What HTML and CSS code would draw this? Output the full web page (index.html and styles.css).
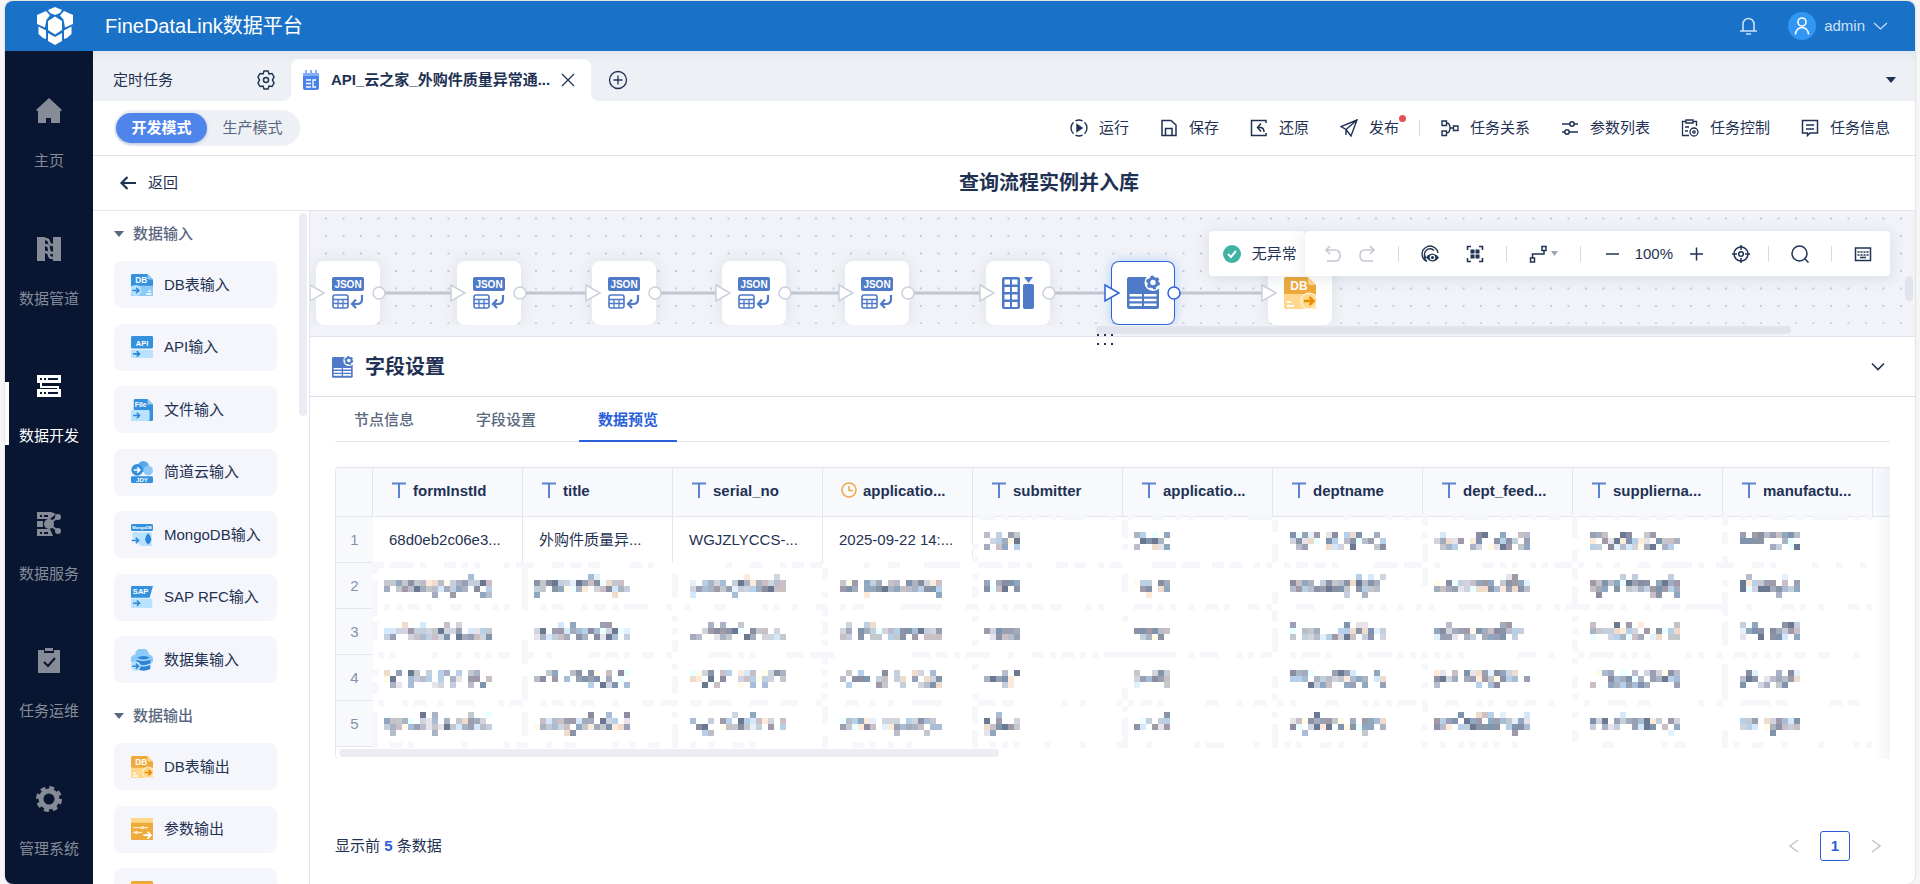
FILE: index.html
```html
<!DOCTYPE html>
<html lang="zh-CN">
<head>
    <meta charset="UTF-8">
    <meta name="viewport" content="width=device-width, initial-scale=1.0">
    <title>FineDataLink数据平台</title>
    <link rel="stylesheet" href="styles.css">
</head>
<body>
    <!-- shared icons -->
    <svg class="sprite" aria-hidden="true">
        <symbol id="node-json" viewBox="0 0 32 32">
            <rect x="0" y="0" width="32" height="14" rx="2" fill="#4f7ac7"/>
            <text x="16" y="11" text-anchor="middle" font-size="10" font-weight="bold" fill="#fff">JSON</text>
            <rect x="1" y="18" width="15" height="13" rx="2" fill="none" stroke="#4f7ac7" stroke-width="1.6"/>
            <path d="M1 22.500h15M1 26.500h15M6 22v9M11 22v9" stroke="#4f7ac7" stroke-width="1.300"/>
            <path d="M30 18v4q0 5-5 5h-4M24 22.500L20 27l4 4" fill="none" stroke="#4f7ac7" stroke-width="2.200"/>
        </symbol>
        <symbol id="field-icon" viewBox="0 0 32 32">
            <path d="M2 0H32V30q0 2-2 2H2q-2 0-2-2V2q0-2 2-2z" fill="#4f7ac7"/>
            <path d="M2.500 17H15v2.500H2.500zM17 17H29.500v2.500H17zM2.500 21.700H15v2.500H2.500zM17 21.700H29.500v2.500H17zM2.500 26.500H15v2.500H2.500zM17 26.500H29.500v2.500H17z" fill="#fff"/>
            <circle cx="26" cy="5.500" r="8.500" fill="#fff"/>
            <circle cx="26" cy="5.500" r="4.200" fill="none" stroke="#4f7ac7" stroke-width="3"/>
            <circle cx="26" cy="5.500" r="6" fill="none" stroke="#4f7ac7" stroke-width="2" stroke-dasharray="3 3.280"/>
        </symbol>
        <symbol id="db-out" viewBox="0 0 32 32">
            <path d="M2 0H24L32 8V18H0V2q0-2 2-2z" fill="#efaa3c"/>
            <path d="M0 17H32V30q0 2-2 2H2q-2 0-2-2z" fill="#ffd88b"/>
            <path d="M24 0l8 8h-6q-2 0-2-2z" fill="#ffd88b"/>
            <text x="15" y="13" text-anchor="middle" font-size="12" font-weight="bold" fill="#fff">DB</text>
            <path d="M3 25h4M3 29h7" stroke="#fff" stroke-width="2"/>
            <circle cx="25" cy="24" r="8" fill="#ffd88b" stroke="#fff" stroke-width="1"/>
            <path d="M20 24h9M25.500 20l4 4-4 4" fill="none" stroke="#e68a00" stroke-width="2.400"/>
        </symbol>
        <symbol id="db-in" viewBox="0 0 32 32">
            <path d="M2 0H24L32 8V18H0V2q0-2 2-2z" fill="#3391dd"/>
            <path d="M0 17H32V30q0 2-2 2H2q-2 0-2-2z" fill="#8ccbf8"/>
            <path d="M24 0l8 8h-6q-2 0-2-2z" fill="#8ccbf8"/>
            <text x="15" y="13" text-anchor="middle" font-size="12" font-weight="bold" fill="#fff">DB</text>
            <path d="M25 25h4M22 29h8" stroke="#fff" stroke-width="2"/>
            <circle cx="7" cy="24" r="8" fill="#b9e2ff"/>
            <path d="M2 24h9M7.500 20l4 4-4 4" fill="none" stroke="#2b86d6" stroke-width="2.400"/>
        </symbol>
        <symbol id="type-text" viewBox="0 0 14 16">
            <path d="M0 1.500h14M7 1v15" fill="none" stroke="#5b84d0" stroke-width="2"/>
        </symbol>
        <symbol id="ports" viewBox="0 0 84 20">
            <path d="M4 2L18 10L4 18z" fill="#fff" stroke="currentColor" stroke-width="1.500"/>
            <circle cx="73" cy="10" r="6" fill="#fff" stroke="currentColor" stroke-width="1.500"/>
        </symbol>
    </svg>

    <div class="app">
        <header class="topbar">
            <svg width="36" height="38" viewBox="0 0 36 38" fill="#fff">
                <path d="M18 0l7 3-2 3-5 2-5-2-2-3zM9 4l4 4.500-3.500 4L8 20.500 0 17V8zM27 4l-4 4.500 3.500 4L28 20.500 36 17V8zM18 9.500l7 4.500v9l-7 4.500-7-4.500v-9zM1.500 19.500l7.500 4V32l-3-1-4.500-4zM34.500 19.500l-7.500 4V32l3-1 4.500-4zM11 26l7 4 7-4v8l-7 4-7-4z"/>
            </svg>
            <h1>FineDataLink数据平台</h1>
            <div class="user">
                <button class="bell" aria-label="消息">
                    <svg width="17" height="18" viewBox="0 0 17 18" fill="none" stroke="currentColor" stroke-width="1.600">
                        <path d="M3 14V7a5.500 5.500 0 0 1 11 0v7M0 14h17M6 17h5"/>
                    </svg>
                </button>
                <button class="account">
                    <svg width="28" height="28" viewBox="0 0 28 28" fill="none" stroke="#fff" stroke-width="1.600">
                        <circle cx="14" cy="14" r="14" fill="#3296f5" stroke="none"/>
                        <circle cx="14" cy="10" r="4"/>
                        <path d="M7.500 22.500a6.500 7 0 0 1 13 0"/>
                    </svg>
                    <span>admin</span>
                    <svg width="15" height="8" viewBox="0 0 15 8" fill="none" stroke="currentColor" stroke-width="1.200"><path d="M1 1l6.500 6L14 1"/></svg>
                </button>
            </div>
        </header>

        <div class="body">
            <nav class="sidebar">
                <a href="#">
                    <svg width="26" height="26" viewBox="0 0 26 26" fill="currentColor"><path d="M13 0L0 12l1 1h1v12h8v-5h5v5h9V13h1l1-1z"/></svg>
                    <span>主页</span>
                </a>
                <a href="#">
                    <svg width="26" height="26" viewBox="0 0 26 26" fill="currentColor"><path d="M1 1h8v24H1zM17 1h8v24h-8z"/><path d="M9 3q4 0 4 3t4 3M9 9q4 0 4 4t4 4M9 16q4 0 4 3t4 3" fill="none" stroke="currentColor" stroke-width="2.500"/></svg>
                    <span>数据管道</span>
                </a>
                <a href="#" class="active">
                    <svg width="26" height="26" viewBox="0 0 26 26" fill="currentColor"><path fill-rule="evenodd" d="M1 2h24v8H1zM4 5v2h2V5zM8 5v2h2V5zM12 5v2h10V5zM1 16h24v8H1zM4 19v2h2v-2zM8 19v2h2v-2zM12 19v2h10v-2z"/><path d="M5 10v4h17v2" fill="none" stroke="currentColor" stroke-width="2"/></svg>
                    <span>数据开发</span>
                </a>
                <a href="#">
                    <svg width="26" height="26" viewBox="0 0 26 26" fill="currentColor"><path fill-rule="evenodd" d="M1 1h14l5 2-6 5H1zM4 4v2h2V4zM8 4v2h4V4zM1 10h6v6H1zM1 18h13l3 7H1zM4 21v2h2v-2zM8 21v2h4v-2z"/><circle cx="13" cy="13" r="5"/><circle cx="22" cy="6" r="3"/><circle cx="22" cy="20" r="3"/><path d="M13 13l9-7M13 13l9 7" stroke="currentColor" stroke-width="2"/></svg>
                    <span>数据服务</span>
                </a>
                <a href="#">
                    <svg width="26" height="26" viewBox="0 0 26 26"><path d="M2 2h6v3h10V2h6v23H2zM9 0h8v3H9z" fill="currentColor"/><path d="M8 14l4 4 7-8" fill="none" stroke="#081632" stroke-width="2"/></svg>
                    <span>任务运维</span>
                </a>
                <a href="#">
                    <svg width="26" height="26" viewBox="0 0 26 26" fill="none" stroke="currentColor"><circle cx="13" cy="13" r="8" stroke-width="5"/><circle cx="13" cy="13" r="11.500" stroke-width="3" stroke-dasharray="5 4.030"/></svg>
                    <span>管理系统</span>
                </a>
            </nav>

            <main>
                <div class="tabbar">
                    <div class="tab-root">
                        <span>定时任务</span>
                        <button aria-label="设置">
                            <svg width="18" height="20" viewBox="0 0 18 20" fill="none" stroke="currentColor" stroke-width="1.500"><path d="M7 1h4l1 3 3-0.500L17 7l-1.500 3L17 13l-2 3.500-3-0.500-1 3H7l-1-3-3 0.500L1 13l1.500-3L1 7l2-3.500L6 4z"/><circle cx="9" cy="10" r="2.500"/></svg>
                        </button>
                    </div>
                    <div class="tab">
                        <svg width="16" height="20" viewBox="0 0 16 20"><path d="M0 3h16v15q0 2-2 2H2q-2 0-2-2z" fill="#4b83ec"/><path d="M0 3h16v3H0z" fill="#87aef5"/><path d="M3 0v4M8 0v4M13 0v4" stroke="#87aef5" stroke-width="2"/><path d="M3 10h5M3 13.500h5M3 17h5M13 10h-3v7h3" fill="none" stroke="#fff" stroke-width="1.300"/></svg>
                        <span>API_云之家_外购件质量异常通...</span>
                        <button aria-label="关闭"><svg width="14" height="14" viewBox="0 0 14 14" fill="none" stroke="currentColor" stroke-width="1.300"><path d="M1 1l12 12M13 1L1 13"/></svg></button>
                    </div>
                    <button class="tab-add" aria-label="新建">
                        <svg width="20" height="20" viewBox="0 0 20 20" fill="none" stroke="currentColor" stroke-width="1.300"><circle cx="10" cy="10" r="8.500"/><path d="M5.500 10h9M10 5.500v9"/></svg>
                    </button>
                    <button class="tab-more" aria-label="更多"><svg width="10" height="6" viewBox="0 0 10 6"><path d="M0 0h10L5 6z" fill="currentColor"/></svg></button>
                </div>

                <div class="toolbar">
                    <div class="mode">
                        <button class="on">开发模式</button>
                        <button>生产模式</button>
                    </div>
                    <div class="actions">
                        <button>
                            <svg width="18" height="18" viewBox="0 0 18 18" fill="none" stroke="currentColor" stroke-width="1.400"><path d="M5.500 1.800a8 8 0 0 1 7 0M14.500 3.200a8 8 0 0 1 0 11.600M12.500 16.200a8 8 0 0 1-7 0M3.500 14.800a8 8 0 0 1 0-11.600"/><path d="M7 5.500l5 3.500-5 3.500z" fill="currentColor"/></svg>
                            <span>运行</span>
                        </button>
                        <button>
                            <svg width="18" height="18" viewBox="0 0 18 18" fill="none" stroke="currentColor" stroke-width="1.500"><path d="M2 1.500h9L16 6v10.500H2zM5.500 16V9.500H12V16"/></svg>
                            <span>保存</span>
                        </button>
                        <button>
                            <svg width="18" height="18" viewBox="0 0 18 18" fill="none" stroke="currentColor" stroke-width="1.500"><path d="M16 4V1.500H1.500v15H16V14"/><path d="M11 4.500L7.500 8.500l3.500 4M7.500 8.500H11q3 0.500 3 4.500"/></svg>
                            <span>还原</span>
                        </button>
                        <button class="publish">
                            <svg width="18" height="18" viewBox="0 0 18 18" fill="none" stroke="currentColor" stroke-width="1.400"><path d="M17 1L1 7.500l5 3 5 6.500zM17 1L6 10.500V16"/></svg>
                            <span>发布</span>
                        </button>
                        <i class="line"></i>
                        <button>
                            <svg width="18" height="18" viewBox="0 0 18 18" fill="none" stroke="currentColor" stroke-width="1.400"><path d="M1 2h4.500v4.500H1zM1 12h4.500v4.500H1zM12.500 7H17v4.500h-4.500zM5.500 4Q9 4 9 9t-3.500 5M9 9h3.500"/></svg>
                            <span>任务关系</span>
                        </button>
                        <button>
                            <svg width="18" height="18" viewBox="0 0 18 18" fill="none" stroke="currentColor" stroke-width="1.500"><path d="M1 5h8M13 5h4M1 13h3M8 13h9"/><circle cx="11" cy="5" r="2.200"/><circle cx="6" cy="13" r="2.200"/></svg>
                            <span>参数列表</span>
                        </button>
                        <button>
                            <svg width="18" height="18" viewBox="0 0 18 18" fill="none" stroke="currentColor" stroke-width="1.300"><path d="M5 2.500H1.500v14H8M12 2.500h3.500V7M5 1h7v3H5zM4 8h4M4 12h3"/><circle cx="13" cy="13" r="4"/><circle cx="13" cy="13" r="1.200"/></svg>
                            <span>任务控制</span>
                        </button>
                        <button>
                            <svg width="18" height="18" viewBox="0 0 18 18" fill="none" stroke="currentColor" stroke-width="1.500"><path d="M1.500 1.500h15v12.500H9L6.500 16.500V14h-5zM5 6h8M5 10h8"/></svg>
                            <span>任务信息</span>
                        </button>
                    </div>
                </div>

                <div class="titlebar">
                    <button class="back">
                        <svg width="18" height="14" viewBox="0 0 18 14" fill="none" stroke="currentColor" stroke-width="2.200"><path d="M17 7H3M8.500 1L2.500 7l6 6"/></svg>
                        <span>返回</span>
                    </button>
                    <h2>查询流程实例并入库</h2>
                </div>

                <div class="work">
                    <aside class="palette">
                        <h3>数据输入</h3>
                        <ul>
                            <li><svg width="22" height="22"><use href="#db-in"/></svg>DB表输入</li>
                            <li><svg width="22" height="22" viewBox="0 0 32 32"><rect width="32" height="18" rx="2" fill="#3391dd"/><rect y="20" width="32" height="12" rx="2" fill="#b9e2ff"/><text x="16" y="14" text-anchor="middle" font-size="11" font-weight="bold" fill="#fff">API</text><path d="M3 26h9M8.500 22l4 4-4 4" fill="none" stroke="#2b86d6" stroke-width="2.200"/></svg>API输入</li>
                            <li><svg width="22" height="22" viewBox="0 0 32 32"><path d="M6 0h18l8 8v22q0 2-2 2H18L4 16V2q0-2 2-2z" fill="#3391dd"/><path d="M24 0l8 8h-8z" fill="#8ccbf8"/><rect y="16" width="27" height="16" rx="2" fill="#b9e2ff"/><text x="14" y="12" text-anchor="middle" font-size="10" font-weight="bold" fill="#fff">File</text><path d="M3 24h9M8.500 20l4 4-4 4" fill="none" stroke="#2b86d6" stroke-width="2.200"/></svg>文件输入</li>
                            <li><svg width="22" height="22" viewBox="0 0 32 32"><circle cx="18" cy="8" r="8" fill="#57aaea"/><circle cx="25" cy="14" r="7" fill="#8ccbf8"/><circle cx="9" cy="13" r="8.500" fill="#3391dd"/><path d="M4 13h9M9 9l4 4-4 4" fill="none" stroke="#fff" stroke-width="2.200"/><rect y="22" width="32" height="10" rx="2" fill="#3391dd"/><text x="16" y="30" text-anchor="middle" font-size="9" font-weight="bold" fill="#fff">JDY</text></svg>简道云输入</li>
                            <li><svg width="22" height="22" viewBox="0 0 32 32"><rect width="32" height="10" rx="2" fill="#3391dd"/><text x="16" y="7" text-anchor="middle" font-size="6" font-weight="bold" fill="#fff">MongoDB</text><path d="M2 12h28v20H14L2 20z" fill="#b9e2ff"/><path d="M25 13q9 10 0 17q-9-7 0-17z" fill="#2b86d6"/><path d="M1 24h10M7 20l4 4-4 4" fill="none" stroke="#2b86d6" stroke-width="2.200"/></svg>MongoDB输入</li>
                            <li><svg width="22" height="22" viewBox="0 0 32 32"><path d="M0 2q0-2 2-2h30l-5 17H0z" fill="#3391dd"/><rect y="18" width="31" height="14" rx="2" fill="#b9e2ff"/><text x="14" y="12" text-anchor="middle" font-size="11" font-weight="bold" fill="#fff">SAP</text><path d="M3 25h9M8.500 21l4 4-4 4" fill="none" stroke="#2b86d6" stroke-width="2.200"/></svg>SAP RFC输入</li>
                            <li><svg width="22" height="22" viewBox="0 0 32 32"><path d="M7 22A7 7 0 0 1 6 8a10 9 0 0 1 20 0a7 7 0 0 1-1 14z" fill="#8ccbf8"/><path d="M8 13q10-6 20 0v16q-10 5-20 0z" fill="#2b86d6"/><path d="M8 14q10 5 20 0M8 22q10 5 20 0" fill="none" stroke="#c8e7ff" stroke-width="2"/><circle cx="7" cy="25" r="7" fill="#b9e2ff"/><path d="M2 25h9M7 21l4 4-4 4" fill="none" stroke="#2b86d6" stroke-width="2.200"/></svg>数据集输入</li>
                        </ul>
                        <h3>数据输出</h3>
                        <ul class="out">
                            <li><svg width="22" height="22"><use href="#db-out"/></svg>DB表输出</li>
                            <li><svg width="22" height="22" viewBox="0 0 32 32"><rect width="32" height="32" rx="2" fill="#efaa3c"/><path d="M0 7V2q0-2 2-2h28q2 0 2 2v5z" fill="#ffd88b"/><path d="M3 14h22M3 21h13" stroke="#ffe9bd" stroke-width="2"/><circle cx="17" cy="14" r="2.500" fill="#ffe9bd"/><circle cx="8" cy="21" r="2.500" fill="#ffe9bd"/><path d="M18 25h10M24 20l5 5-5 5" fill="none" stroke="#fff" stroke-width="2.400"/></svg>参数输出</li>
                            <li><svg width="22" height="22" viewBox="0 0 32 32"><rect width="32" height="18" rx="2" fill="#efaa3c"/><path d="M6 8h20" stroke="#fff" stroke-width="2"/></svg>API输出</li>
                        </ul>
                        <div class="palette-scroll"></div>
                    </aside>

                    <section class="stage">
                        <div class="canvas">
                            <svg class="wires" width="100%" height="100%">
                                <defs>
                                    <pattern id="dots" width="35" height="35" patternUnits="userSpaceOnUse" x="7" y="-2">
                                        <path d="M8 8.500h2v2h-2zM25.500 8.500h2v2h-2zM8 26h2v2h-2zM25.500 26h2v2h-2z" fill="#c8ccd3"/>
                                    </pattern>
                                </defs>
                                <rect width="100%" height="113" fill="url(#dots)"/>
                                <path d="M70 82H147M211 82H282M346 82H412M476 82H535M599 82H676M740 82H801M865 82H958" stroke="#bfc8d2" stroke-width="3"/>
                            </svg>
                            <div class="nodes">
                                <div class="node n1"><svg width="32" height="32"><use href="#node-json"/></svg><svg class="ports" width="84" height="20"><use href="#ports"/></svg></div>
                                <div class="node n2"><svg width="32" height="32"><use href="#node-json"/></svg><svg class="ports" width="84" height="20"><use href="#ports"/></svg></div>
                                <div class="node n3"><svg width="32" height="32"><use href="#node-json"/></svg><svg class="ports" width="84" height="20"><use href="#ports"/></svg></div>
                                <div class="node n4"><svg width="32" height="32"><use href="#node-json"/></svg><svg class="ports" width="84" height="20"><use href="#ports"/></svg></div>
                                <div class="node n5"><svg width="32" height="32"><use href="#node-json"/></svg><svg class="ports" width="84" height="20"><use href="#ports"/></svg></div>
                                <div class="node n6">
                                    <svg width="32" height="32" viewBox="0 0 32 32"><rect width="18" height="32" rx="2" fill="#4f7ac7"/><path d="M2.500 2.500H8v5H2.500zM10 2.500h5.500v5H10zM2.500 10H8v5H2.500zM10 10h5.500v5H10zM2.500 17.500H8v5H2.500zM10 17.500h5.500v5H10zM2.500 25H8v5H2.500zM10 25h5.500v5H10z" fill="#fff"/><path d="M22 0h9l-4.500 6z" fill="#4f7ac7"/><rect x="21" y="7" width="11" height="25" rx="2" fill="#4f7ac7"/></svg>
                                    <svg class="ports" width="84" height="20"><use href="#ports"/></svg>
                                </div>
                                <div class="node n7 selected"><svg width="32" height="32"><use href="#field-icon" class="field-use"/></svg><svg class="ports" width="84" height="20"><use href="#ports"/></svg></div>
                                <div class="node n8"><svg width="32" height="32"><use href="#db-out"/></svg><svg class="ports" width="84" height="20" viewBox="0 0 84 20"><path d="M4 2L18 10L4 18z" fill="#fff" stroke="currentColor" stroke-width="1.500"/></svg></div>
                            </div>
                            <div class="canvas-bar">
                                <div class="status">
                                    <svg width="18" height="18" viewBox="0 0 18 18"><circle cx="9" cy="9" r="9" fill="#41b3a3"/><path d="M5 9l3 3 5-6" fill="none" stroke="#fff" stroke-width="2"/></svg>
                                    <span>无异常</span>
                                </div>
                                <div class="tools">
                                    <div class="undo">
                                        <button aria-label="撤销"><svg width="18" height="18" viewBox="0 0 18 18" fill="none" stroke="currentColor" stroke-width="1.600"><path d="M6 1L2 5l4 4M2 5h9q5 0 5 5.500T11 16H3"/></svg></button>
                                        <button aria-label="重做"><svg width="18" height="18" viewBox="0 0 18 18" fill="none" stroke="currentColor" stroke-width="1.600"><path d="M12 1l4 4-4 4M16 5H7Q2 5 2 10.500T7 16h8"/></svg></button>
                                    </div>
                                    <i class="line"></i>
                                    <div class="views">
                                        <button aria-label="查看"><svg width="18" height="18" viewBox="0 0 18 18" fill="none" stroke="currentColor" stroke-width="1.400"><path d="M5 16A8 8 0 1 1 17 8M5 13A5 5 0 1 1 13 5.500M6 16.500Q3 14 3.500 10"/><path d="M5 12.500q6-8 13 0q-6 8-13 0z" fill="currentColor" stroke="none"/><circle cx="11.500" cy="12.500" r="2.200" fill="currentColor" stroke="#fff" stroke-width="1.200"/></svg></button>
                                        <button aria-label="布局"><svg width="18" height="18" viewBox="0 0 18 18" fill="none" stroke="currentColor" stroke-width="1.600"><path d="M1.500 5V1.500H5M13 1.500h3.500V5M16.500 13v3.500H13M5 16.500H1.500V13"/><path d="M4.500 4.500h4v4h-4zM9.500 4.500h4v4h-4zM4.500 9.500h4v4h-4zM9.500 9.500h4v4h-4z" fill="currentColor" stroke="none"/></svg></button>
                                    </div>
                                    <i class="line"></i>
                                    <button class="route" aria-label="连线">
                                        <svg width="18" height="18" viewBox="0 0 18 18" fill="none" stroke="currentColor" stroke-width="1.500"><path d="M1.500 13h4v4h-4zM13 1.500h4v4h-4zM3.500 13V9H15V5.500"/></svg>
                                        <svg width="7" height="6" viewBox="0 0 7 6"><path d="M0 0h7L3.500 5z" fill="#9aa3b2"/></svg>
                                    </button>
                                    <i class="line"></i>
                                    <div class="zoom">
                                        <button aria-label="缩小"><svg width="18" height="18" viewBox="0 0 18 18" stroke="currentColor" stroke-width="1.500"><path d="M3 9h13"/></svg></button>
                                        <span>100%</span>
                                        <button aria-label="放大"><svg width="18" height="18" viewBox="0 0 18 18" stroke="currentColor" stroke-width="1.500"><path d="M3 9h13M9.500 2.500v13"/></svg></button>
                                    </div>
                                    <button class="target" aria-label="定位"><svg width="18" height="18" viewBox="0 0 18 18" fill="none" stroke="currentColor" stroke-width="1.500"><circle cx="9" cy="9" r="7"/><circle cx="9" cy="9" r="2.300"/><path d="M9 0v5M9 13v5M0 9h5M13 9h5"/></svg></button>
                                    <i class="line"></i>
                                    <button aria-label="搜索"><svg width="18" height="18" viewBox="0 0 18 18" fill="none" stroke="currentColor" stroke-width="1.500"><circle cx="8.500" cy="8.500" r="7.500"/><path d="M14 14l3.500 3.500"/></svg></button>
                                    <i class="line"></i>
                                    <button aria-label="快捷键"><svg width="18" height="18" viewBox="0 0 18 18" fill="none" stroke="currentColor" stroke-width="1.500"><path d="M1.500 3h15v12.500h-15z"/><path d="M3.500 7h11M3.500 10h11" stroke-dasharray="2 1"/><path d="M6 12.500h6"/></svg></button>
                                </div>
                            </div>
                            <div class="hscroll"></div>
                            <div class="vscroll"></div>
                            <svg class="grip" width="18" height="12" viewBox="0 0 18 12" fill="#1f3253"><path d="M1 1h2v2H1zM8 1h2v2H8zM15 1h2v2h-2zM1 10h2v2H1zM8 10h2v2H8zM15 10h2v2h-2z"/></svg>
                        </div>

                        <div class="detail-head">
                            <svg width="22" height="24" viewBox="0 -2 34 35"><use href="#field-icon" class="field-use" width="32" height="32"/></svg>
                            <h2>字段设置</h2>
                            <button aria-label="收起"><svg width="16" height="10" viewBox="0 0 16 10" fill="none" stroke="currentColor" stroke-width="1.600"><path d="M2 1.500l6 6 6-6"/></svg></button>
                        </div>

                        <div class="detail">
                            <div class="tabs" role="tablist">
                                <button role="tab">节点信息</button>
                                <button role="tab">字段设置</button>
                                <button role="tab" class="on" aria-selected="true">数据预览</button>
                            </div>

                            <div class="grid">
                                <table>
                                    <colgroup><col class="idx"><col span="11"></colgroup>
                                    <thead>
                                        <tr>
                                            <th></th>
                                            <th><svg width="14" height="16"><use href="#type-text"/></svg>formInstId</th>
                                            <th><svg width="14" height="16"><use href="#type-text"/></svg>title</th>
                                            <th><svg width="14" height="16"><use href="#type-text"/></svg>serial_no</th>
                                            <th><svg width="14" height="16" viewBox="0 0 14 16" overflow="visible" fill="none" stroke="#efa94a" stroke-width="1.600"><circle cx="7" cy="8" r="7"/><path d="M7 4v4.500h4"/></svg>applicatio...</th>
                                            <th><svg width="14" height="16"><use href="#type-text"/></svg>submitter</th>
                                            <th><svg width="14" height="16"><use href="#type-text"/></svg>applicatio...</th>
                                            <th><svg width="14" height="16"><use href="#type-text"/></svg>deptname</th>
                                            <th><svg width="14" height="16"><use href="#type-text"/></svg>dept_feed...</th>
                                            <th><svg width="14" height="16"><use href="#type-text"/></svg>supplierna...</th>
                                            <th><svg width="14" height="16"><use href="#type-text"/></svg>manufactu...</th>
                                            <th></th>
                                        </tr>
                                    </thead>
                                    <tbody>
                                        <tr>
                                            <th>1</th>
                                            <td>68d0eb2c06e3...</td>
                                            <td>外购件质量异...</td>
                                            <td>WGJZLYCCS-...</td>
                                            <td>2025-09-22 14:...</td>
                                            <td class="mask"></td><td class="mask"></td><td class="mask"></td><td class="mask"></td><td class="mask"></td><td class="mask"></td><td></td>
                                        </tr>
                                        <tr><th>2</th><td class="mask"></td><td class="mask"></td><td class="mask"></td><td class="mask"></td><td class="mask"></td><td class="mask"></td><td class="mask"></td><td class="mask"></td><td class="mask"></td><td class="mask"></td><td></td></tr>
                                        <tr><th>3</th><td class="mask"></td><td class="mask"></td><td class="mask"></td><td class="mask"></td><td class="mask"></td><td class="mask"></td><td class="mask"></td><td class="mask"></td><td class="mask"></td><td class="mask"></td><td></td></tr>
                                        <tr><th>4</th><td class="mask"></td><td class="mask"></td><td class="mask"></td><td class="mask"></td><td class="mask"></td><td class="mask"></td><td class="mask"></td><td class="mask"></td><td class="mask"></td><td class="mask"></td><td></td></tr>
                                        <tr><th>5</th><td class="mask"></td><td class="mask"></td><td class="mask"></td><td class="mask"></td><td class="mask"></td><td class="mask"></td><td class="mask"></td><td class="mask"></td><td class="mask"></td><td class="mask"></td><td></td></tr>
                                    </tbody>
                                </table>
                                <div class="grid-scroll"><div></div></div>
                            </div>

                            <div class="foot">
                                <p>显示前 <b>5</b> 条数据</p>
                                <div class="pager">
                                    <button aria-label="上一页"><svg width="10" height="14" viewBox="0 0 10 14" fill="none" stroke="currentColor" stroke-width="1.500"><path d="M9 1L1 7l8 6"/></svg></button>
                                    <button class="page">1</button>
                                    <button aria-label="下一页"><svg width="10" height="14" viewBox="0 0 10 14" fill="none" stroke="currentColor" stroke-width="1.500"><path d="M1 1l8 6-8 6"/></svg></button>
                                </div>
                            </div>
                        </div>
                    </section>
                </div>
            </main>
        </div>
    </div>
    <script src="mask.js"></script>
</body>
</html>
```
FILE: styles.css
```css
* {
    box-sizing: border-box;
}
body {
    margin: 0;
    padding: 1px 5px 0;
    height: 100vh;
    overflow: hidden;
    background: #f6f6f6;
    color: #1f3253;
    font-family: "Liberation Sans", "Noto Sans CJK SC", sans-serif;
    font-size: 15px;
    line-height: 20px;
}
h1, h2, h3, p, ul {
    margin: 0;
    padding: 0;
}
ul {
    list-style: none;
}
button {
    padding: 0;
    border: none;
    background: none;
    color: inherit;
    font: inherit;
    cursor: pointer;
}
svg {
    display: block;
    flex: none;
}
.sprite {
    display: none;
}
#field-icon {
    overflow: visible;
}
.app {
    display: flex;
    flex-direction: column;
    height: 100%;
    border-radius: 8px;
    overflow: hidden;
    background: #fff;
    box-shadow: 0 0 2px rgba(0, 0, 0, 0.25);
}

/* header */
.topbar {
    display: flex;
    align-items: center;
    flex: none;
    height: 50px;
    padding: 0 27px 0 32px;
    background: #1a72c8;
    color: #fff;
}
.topbar h1 {
    margin-left: 32px;
    font-size: 20px;
    font-weight: normal;
    line-height: 30px;
}
.user {
    display: flex;
    align-items: center;
    gap: 31px;
    margin-left: auto;
    color: #cce1f5;
}
.account {
    display: flex;
    align-items: center;
    gap: 8px;
}

/* left navigation */
.body {
    display: flex;
    flex: 1;
    min-height: 0;
}
.sidebar {
    display: flex;
    flex-direction: column;
    flex: none;
    width: 88px;
    padding-bottom: 8px;
    background: #081632;
}
.sidebar a {
    position: relative;
    flex: 1;
    display: flex;
    flex-direction: column;
    align-items: center;
    gap: 27px;
    padding-top: 47px;
    color: #868b98;
    text-decoration: none;
}
.sidebar .active {
    color: #fff;
}
.sidebar .active::before {
    content: "";
    position: absolute;
    left: 0;
    top: 56px;
    width: 4px;
    height: 63px;
    background: #fff;
}
main {
    flex: 1;
    min-width: 0;
    display: flex;
    flex-direction: column;
}

/* task tabs */
.tabbar {
    display: flex;
    align-items: flex-end;
    flex: none;
    height: 50px;
    background: linear-gradient(#e3e7ee, #edf0f5 12px);
}
.tab-root {
    display: flex;
    align-items: center;
    justify-content: space-between;
    width: 198px;
    height: 42px;
    padding: 0 16px 0 20px;
}
.tab {
    position: relative;
    display: flex;
    align-items: center;
    width: 300px;
    height: 42px;
    padding: 0 16px 0 12px;
    border-radius: 8px 8px 0 0;
    background: #fff;
    font-weight: bold;
    white-space: nowrap;
}
.tab::before, .tab::after {
    content: "";
    position: absolute;
    bottom: 0;
    width: 8px;
    height: 8px;
    background: radial-gradient(circle at 0 0, transparent 8px, #fff 8px);
}
.tab::before {
    left: -8px;
}
.tab::after {
    right: -8px;
    background: radial-gradient(circle at 8px 0, transparent 8px, #fff 8px);
}
.tab span {
    margin-left: 12px;
}
.tab button {
    margin-left: auto;
}
.tab-add {
    margin: 0 0 11px 17px;
}
.tab-more {
    margin: 0 19px 18px auto;
}

/* toolbar */
.toolbar {
    display: flex;
    align-items: center;
    justify-content: space-between;
    flex: none;
    height: 55px;
    padding: 0 25px 0 21px;
    border-bottom: 1px solid #e1e4ee;
}
.mode {
    display: flex;
    height: 36px;
    padding: 3px 2px;
    border-radius: 18px;
    background: #edf0f5;
}
.mode button {
    width: 91px;
    border-radius: 15px;
    color: #5a6780;
}
.mode .on {
    background: #4f85ea;
    color: #fff;
    font-weight: bold;
    box-shadow: 0 1px 3px rgba(40, 80, 160, 0.3);
}
.actions {
    display: flex;
    align-items: center;
    gap: 31px;
}
.actions button {
    position: relative;
    display: flex;
    align-items: center;
    gap: 11px;
    white-space: nowrap;
}
.publish::after {
    content: "";
    position: absolute;
    right: -7px;
    top: -3px;
    width: 7px;
    height: 7px;
    border-radius: 50%;
    background: #e65050;
}
.line {
    flex: none;
    width: 1px;
    height: 16px;
    background: #d5d9e2;
}
.actions .line {
    margin: 0 -10px 0 -11px;
}
.titlebar {
    display: flex;
    align-items: center;
    flex: none;
    height: 55px;
    padding-left: 26px;
    border-bottom: 1px solid #e3e5ee;
}
.back {
    display: flex;
    align-items: center;
    gap: 11px;
}
h2 {
    font-size: 20px;
    line-height: 30px;
}
.titlebar h2 {
    flex: 1;
    padding-left: 5px;
    text-align: center;
}

/* operator palette */
.work {
    display: flex;
    flex: 1;
    min-height: 0;
}
.palette {
    position: relative;
    flex: none;
    width: 217px;
    padding: 0 32px 0 21px;
    overflow: hidden;
    border-right: 1px solid #e1e4ee;
}
.palette h3 {
    display: flex;
    align-items: center;
    gap: 9px;
    margin: 13px 0 17px;
    color: #5a6780;
    font-size: 15px;
    font-weight: 500;
}
.palette h3::before {
    content: "";
    border: 5px solid transparent;
    border-top: 6px solid #5a6780;
    border-bottom: none;
}
.palette ul {
    display: grid;
    grid-auto-rows: 47px;
    align-content: space-between;
    height: 422px;
    margin-bottom: 23px;
}
.palette .out {
    height: 172px;
}
.palette li {
    display: flex;
    align-items: center;
    gap: 11px;
    padding-left: 17px;
    border-radius: 8px;
    background: #f5f6fb;
    white-space: nowrap;
}
.palette-scroll {
    position: absolute;
    right: 2px;
    top: 2px;
    width: 8px;
    height: 203px;
    border-radius: 4px;
    background: #ebedf2;
}

/* flow canvas */
.stage {
    flex: 1;
    min-width: 0;
    display: flex;
    flex-direction: column;
}
.canvas {
    position: relative;
    flex: none;
    height: 126px;
    border-bottom: 1px solid #e1e4ee;
    background: #f2f3f8;
}
.wires {
    position: absolute;
    left: 0;
    top: 0;
}
.nodes {
    position: relative;
    height: 114px;
    overflow: hidden;
}
.node {
    position: absolute;
    top: 50px;
    width: 64px;
    height: 64px;
    padding: 16px;
    border-radius: 8px;
    background: #fff;
    box-shadow: 0 0 16px rgba(120, 150, 170, 0.2);
    color: #cbd0dd;
}
.node.selected {
    color: #2f62db;
    box-shadow: inset 0 0 0 1px #2f62db, 0 0 12px rgba(60, 140, 240, 0.35);
}
.node svg {
    overflow: visible;
}
.ports {
    position: absolute;
    left: -10px;
    top: 22px;
}
.n1 { left: 6px; }
.n2 { left: 147px; }
.n3 { left: 282px; }
.n4 { left: 412px; }
.n5 { left: 535px; }
.n6 { left: 676px; }
.n7 { left: 801px; }
.n8 { left: 958px; }
.canvas-bar {
    position: absolute;
    top: 20px;
    right: 25px;
    display: flex;
    height: 45px;
}
.status, .tools {
    display: flex;
    align-items: center;
    border-radius: 4px;
    background: #fff;
    box-shadow: 0 2px 16px rgba(60, 80, 120, 0.14);
}
.status {
    gap: 11px;
    width: 96px;
    padding-left: 14px;
    white-space: nowrap;
}
.tools {
    position: relative;
    gap: 22px;
    padding: 0 18px 0 19px;
}
.tools > div, .route {
    display: flex;
    align-items: center;
}
.undo {
    gap: 16px;
    color: #c3c8d1;
}
.views {
    gap: 27px;
}
.route {
    gap: 4px;
}
.zoom {
    gap: 14px;
}
.target {
    margin: 0 -4px 0 5px;
}
.hscroll, .vscroll {
    position: absolute;
    border-radius: 4px;
    background: #e1e4ec;
}
.hscroll {
    left: 49%;
    right: 124px;
    bottom: 2px;
    height: 8px;
}
.vscroll {
    right: 2px;
    top: 65px;
    width: 8px;
    height: 25px;
}
.grip {
    position: absolute;
    left: 49%;
    bottom: -9px;
}

/* node detail */
.detail-head {
    display: flex;
    align-items: center;
    flex: none;
    height: 60px;
    padding: 0 29px 0 22px;
    border-bottom: 1px solid #dcdfe8;
}
.detail-head h2 {
    margin-left: 11px;
}
.detail-head button {
    margin-left: auto;
}
.detail {
    flex: 1;
    display: flex;
    flex-direction: column;
    min-height: 0;
    padding: 0 25px 23px;
}
.tabs {
    display: flex;
    gap: 24px;
    flex: none;
    height: 45px;
    border-bottom: 1px solid #e4e7ee;
}
.tabs button {
    height: 45px;
    padding: 2px 19px 0;
    border-bottom: 2px solid transparent;
    color: #5a6780;
    font-weight: 500;
}
.tabs .on {
    border-color: #2a5fdb;
    color: #2a5fdb;
    font-weight: bold;
}
.grid {
    position: relative;
    flex: none;
    margin-top: 25px;
    overflow: hidden;
    border: solid #e3e6f0;
    border-width: 1px 0 0 1px;
    border-radius: 4px 0 0 4px;
}
.grid::after {
    content: "";
    position: absolute;
    top: 0;
    right: 0;
    bottom: 0;
    width: 14px;
    background: linear-gradient(90deg, transparent, rgba(120, 130, 160, 0.08));
}
table {
    width: 1687px;
    table-layout: fixed;
    border-collapse: separate;
    border-spacing: 0;
    white-space: nowrap;
}
col {
    width: 150px;
}
.idx {
    width: 37px;
}
th, td {
    height: 46px;
    padding: 0 16px;
    text-align: left;
}
thead th {
    height: 49px;
    padding: 0 0 2px 19px;
    border-right: 1px solid #e3e6f0;
    border-bottom: 1px solid #e3e6f0;
    background: #f7f9fd;
}
thead svg {
    display: inline-block;
    margin-right: 7px;
    vertical-align: -2px;
}
tbody th {
    padding: 0;
    border-bottom: 1px solid #e3e6f0;
    background: #f7f9fd;
    color: #8592ab;
    font-weight: normal;
    text-align: center;
}
td {
    border-right: 1px solid #e3e6f0;
}
.mask {
    position: relative;
    border-right: none;
}
.mask svg {
    position: absolute;
    left: 0;
    top: 0;
    overflow: visible;
}
.grid-scroll {
    padding: 2px 3px;
}
.grid-scroll div {
    width: 660px;
    height: 8px;
    border-radius: 4px;
    background: #ebedf2;
}
.foot {
    display: flex;
    align-items: center;
    justify-content: space-between;
    margin-top: auto;
}
.foot b {
    color: #2a5fdb;
}
.pager {
    display: flex;
    align-items: center;
    gap: 21px;
    padding-right: 9px;
    color: #c0c5d0;
}
.pager .page {
    width: 30px;
    height: 30px;
    border: 1px solid #2a5fdb;
    border-radius: 3px;
    color: #2a5fdb;
    font-weight: bold;
}
```
FILE: mask.js
```js
// draws the mosaic over masked cells, 6px blocks
const SIZE = 6;
const dark = ["#8b93a6", "#9aa0b4", "#7f93ad", "#a3acbc", "#6b7891", "#8fa8c0", "#a09aa8", "#8a8da0"];
const soft = ["#b8bccb", "#c4cfdd", "#a9bcd6", "#c9bfc4", "#b5d0e8", "#d0d4de", "#aab3c4", "#c2c8cc"];
const pale = ["#fdeadb", "#e2f1fb", "#f0dccd", "#e6e3ea", "#eaffff", "#fffbe8", "#d3e8fb"];

// first block and number of blocks for each column
const spans = [[1, 18], [1, 16], [2, 16], [2, 17], [1, 6], [1, 6], [2, 16], [1, 16], [2, 15], [2, 10]];
// columns that hold latin text are drawn lighter
const light = [0, 2, 3];
// top of the first block line and how full each line is
const lines = [
    [15, [0.6, 0.85, 0.6]],
    [11, [0.1, 0.88, 0.9, 0.12]],
    [13, [0.3, 0.85, 0.75]],
    [15, [0.6, 0.8, 0.4]],
    [11, [0.1, 0.82, 0.9, 0.12]]
];
const edges = [-3, -1, -5, -3, -1];

let seed = 20250922;
function rand() {
    seed = (seed * 1103515245 + 12345) % 2147483648;
    return seed / 2147483648;
}

function pick(list) {
    return list[Math.floor(rand() * list.length)];
}

function block(x, y, color) {
    return `<rect x="${x}" y="${y}" width="${SIZE}" height="${SIZE}" fill="${color}"/>`;
}

function color(col) {
    const r = rand();
    const d = light.includes(col) ? 0.25 : 0.42;
    if (r < d) return pick(dark);
    if (r < 0.82) return pick(soft);
    return pick(pale);
}

document.querySelectorAll("tbody tr").forEach((row, r) => {
    Array.from(row.cells).forEach((cell, i) => {
        if (!cell.classList.contains("mask")) return;
        const col = i - 1;
        const [start, count] = spans[col];
        const [top, fill] = lines[r];
        let out = "";
        for (let n = 0; n < 25; n++) {
            if (rand() < 0.45) out += block(n * SIZE - 1, edges[r], "#f6f7fa");
        }
        for (let n = 0; n < 7; n++) {
            if (rand() < 0.5) out += block(-1, edges[r] + SIZE * (n + 1), "#f6f7fa");
            if (r === 4) out += block(Math.floor(rand() * 25) * SIZE - 1, 41, "#f6f7fa");
        }
        fill.forEach((density, line) => {
            for (let n = start; n < start + count; n++) {
                if (rand() < density) out += block(n * SIZE + 5, top + line * SIZE, color(col));
            }
        });
        cell.innerHTML = `<svg width="150" height="46" shape-rendering="crispEdges" aria-hidden="true">${out}</svg>`;
    });
});
```
